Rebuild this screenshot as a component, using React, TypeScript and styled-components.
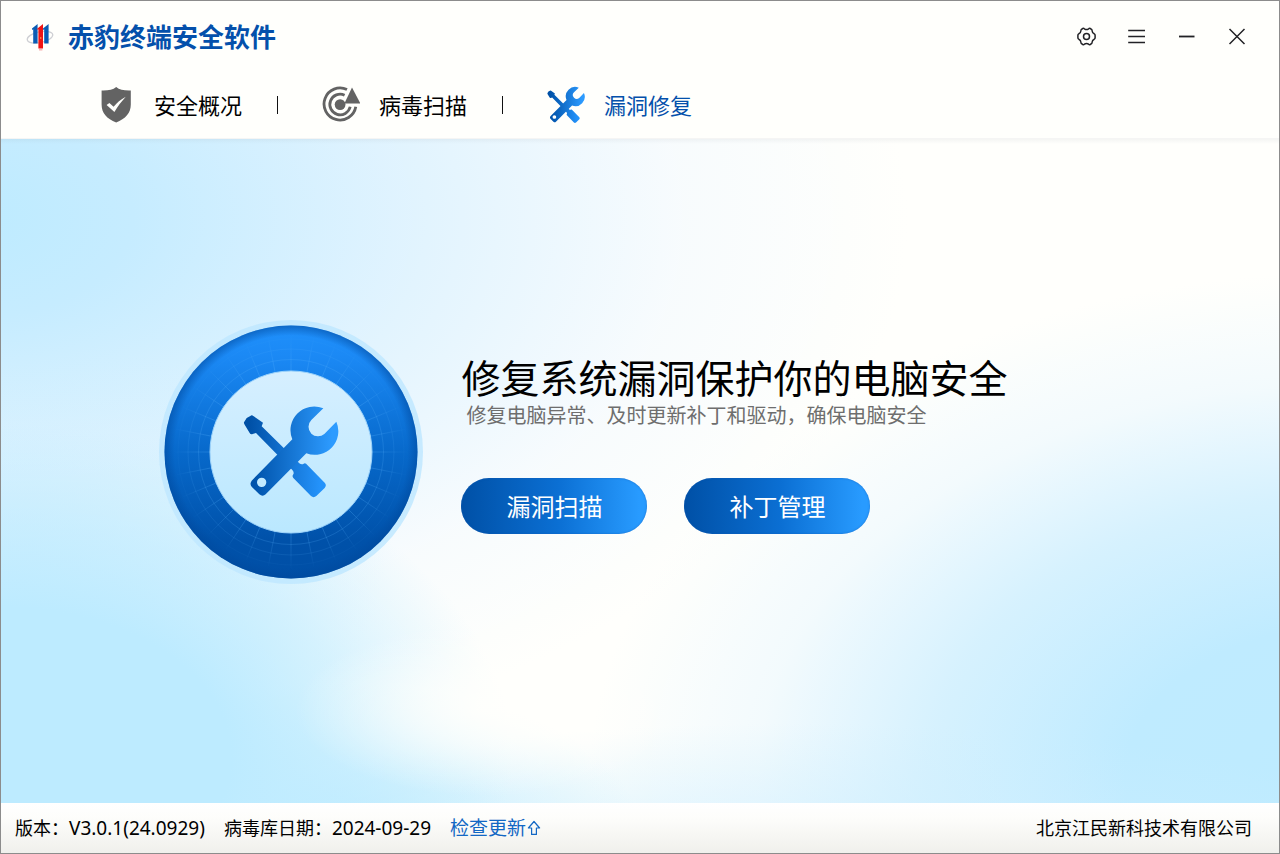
import React from "react";
import styled, { createGlobalStyle } from "styled-components";

const GlobalStyle = createGlobalStyle`
  * { box-sizing: border-box; }
  body { margin: 0; }
  button { font-family: inherit; }
`;

const Window = styled.div`
  display: flex;
  flex-direction: column;
  min-height: 100vh;
  border: 1px solid #8c8c8c;
  background: #fffffc;
  color: #000;
  font-family: "Noto Sans", "Noto Sans CJK SC", sans-serif;
`;

const Header = styled.header`
  padding-bottom: 1px;
  border-bottom: 1px solid #f5f5f4;
`;

const TitleBar = styled.div`
  display: flex;
  align-items: center;
  justify-content: space-between;
  height: 72px;
  padding: 0 17px 0 24px;
`;

const Brand = styled.div`
  display: flex;
  align-items: center;
  gap: 13px;
`;

const AppName = styled.h1`
  margin: 0;
  font-size: 26px;
  line-height: 36px;
  font-weight: 700;
  color: #0450ab;
`;

const WindowControls = styled.div`
  display: flex;
`;

const ControlButton = styled.button`
  display: flex;
  align-items: center;
  justify-content: center;
  width: 50px;
  height: 36px;
  padding: 0;
  border: 0;
  background: none;
  color: #222226;
  cursor: pointer;
`;

const Tabs = styled.nav`
  display: flex;
  align-items: center;
  height: 64px;
  padding-left: 96px;
`;

const Tab = styled.button<{ $active?: boolean }>`
  display: flex;
  align-items: center;
  gap: 19px;
  padding: 0;
  border: 0;
  background: none;
  font-size: 22px;
  line-height: 32px;
  color: ${(p) => (p.$active ? "#0450ab" : "#000")};
  cursor: pointer;
`;

const TabDivider = styled.span`
  width: 1px;
  height: 18px;
  margin: 0 44px 0 35px;
  background: #111;
`;

const Hero = styled.main`
  flex: 1;
  display: flex;
  align-items: center;
  padding: 20px 20px 58px 12.4%;
  background:
    linear-gradient(rgba(120, 130, 140, 0.08), rgba(120, 130, 140, 0) 5px),
    radial-gradient(ellipse 15% 13% at 38% 86%, rgba(255, 255, 252, 0.9) 0%, rgba(255, 255, 252, 0.6) 40%, rgba(255, 255, 252, 0) 100%),
    radial-gradient(ellipse 40% 50% at 0% 93%, #bdebff 0%, #bdebff 45%, rgba(189, 235, 255, 0.6) 70%, rgba(189, 235, 255, 0) 100%),
    radial-gradient(ellipse 24% 22% at 26% 104%, rgba(189, 235, 255, 0.9) 0%, rgba(189, 235, 255, 0.5) 50%, rgba(189, 235, 255, 0) 100%),
    radial-gradient(ellipse 50% 20% at 62% 108%, rgba(205, 238, 255, 0.7) 0%, rgba(215, 242, 255, 0) 100%),
    radial-gradient(ellipse 60% 76% at 106% 96%, #bdebff 0%, #bfebff 30%, rgba(204, 238, 255, 0.8) 56%, rgba(228, 245, 255, 0.45) 78%, rgba(240, 250, 255, 0) 100%),
    radial-gradient(ellipse 30% 34% at 0% 64%, rgba(205, 238, 255, 0.6) 0%, rgba(220, 243, 255, 0) 100%),
    radial-gradient(ellipse 74% 84% at -3% 12%, #bdebff 0%, #c6ecff 18%, rgba(218, 241, 255, 0.85) 46%, rgba(240, 248, 255, 0.5) 76%, rgba(255, 255, 253, 0) 100%),
    #fffffc;
`;

const HeroRow = styled.div`
  display: flex;
  align-items: flex-start;
  gap: 38px;
`;

const Copy = styled.div`
  padding-top: 36px;
`;

const Headline = styled.h2`
  margin: 0;
  font-size: 39px;
  line-height: 44px;
  font-weight: 400;
  white-space: nowrap;
`;

const Summary = styled.p`
  margin: 0;
  padding: 2px 0 0 5px;
  font-size: 20px;
  line-height: 28px;
  font-weight: 400;
  color: #6e6e6e;
`;

const Actions = styled.div`
  display: flex;
  gap: 37px;
  margin-top: 48px;
`;

const ActionButton = styled.button`
  width: 186px;
  height: 56px;
  padding: 2px 0 0;
  border: 0;
  border-radius: 28px;
  background: linear-gradient(90deg, #0050a6, #0b6fd3 52%, #289bff 96%);
  box-shadow: inset 0 0 2px rgba(20, 90, 180, 0.7);
  font-size: 24px;
  line-height: 32px;
  color: #fff;
  cursor: pointer;
`;

const Footer = styled.footer`
  display: flex;
  align-items: center;
  justify-content: space-between;
  height: 50px;
  padding: 0 27px 0 14px;
  background: linear-gradient(#fff, #fdfdfb 30%, #f0f0ec);
  font-size: 18px;
  line-height: 26px;
`;

const StatusGroup = styled.div`
  display: flex;
  align-items: center;
  gap: 19px;
`;

const StatusItem = styled.span`
  display: flex;
  align-items: baseline;
`;

const StatusValue = styled.span`
  font-size: 19px;
`;

const UpdateLink = styled.a`
  display: flex;
  align-items: center;
  gap: 1px;
  font-size: 19px;
  color: #1267c4;
  text-decoration: none;
`;

const BrandMark = () => (
  <svg width="30" height="30" viewBox="0 0 30 30" aria-hidden="true">
    <ellipse cx="15" cy="15.2" rx="13" ry="5.4" fill="none" stroke="#cfd0d4" strokeWidth="1.3" transform="rotate(-12 15 15.2)" />
    <path d="M7 6.6 12.6 2V21.6H8.2V7.2L7 8Z" fill="#0a5cb4" />
    <path d="M18 6.6 23.6 2V21.6H19.2V7.2L18 8Z" fill="#0a5cb4" />
    <path d="M12.4 6.6 18 2V26.4H13.4V7.2L12.4 8Z" fill="#f01414" />
    <path d="M14 27.8h3.4" stroke="#f7b0b0" strokeWidth="1.4" />
    <circle cx="15.8" cy="16" r="0.7" fill="#ffd34d" />
  </svg>
);

const GearIcon = () => (
  <svg width="20" height="20" viewBox="0 0 20 20" fill="none" stroke="currentColor" strokeWidth="1.5" strokeLinejoin="round" aria-hidden="true">
    <path d="M5.8 1.5Q6.7 1.1 7.4 1.8Q9.5 3.2 11.6 1.8Q12.3 1.1 13.2 1.5L14.5 2.3Q15.2 2.9 15.1 3.8Q15.2 5.9 17.2 6.8Q18.1 7.3 18.1 8.2V10.8Q18.1 11.7 17.2 12.2Q15.2 13.1 15.1 15.2Q15.2 16.1 14.5 16.7L13.2 17.5Q12.3 17.9 11.6 17.2Q9.5 15.8 7.4 17.2Q6.7 17.9 5.8 17.5L4.5 16.7Q3.8 16.1 3.9 15.2Q3.8 13.1 1.8 12.2Q0.9 11.7 0.9 10.8V8.2Q0.9 7.3 1.8 6.8Q3.8 5.9 3.9 3.8Q3.8 2.9 4.5 2.3Z" />
    <circle cx="9.5" cy="9.5" r="3" />
  </svg>
);

const MenuIcon = () => (
  <svg width="20" height="20" viewBox="0 0 20 20" stroke="currentColor" strokeWidth="1.7" aria-hidden="true">
    <path d="M1.2 3.5H18M1.2 9.5H18M1.2 15.5H18" />
  </svg>
);

const MinimizeIcon = () => (
  <svg width="20" height="20" viewBox="0 0 20 20" stroke="currentColor" strokeWidth="1.8" aria-hidden="true">
    <path d="M2 9.5H17.5" />
  </svg>
);

const CloseIcon = () => (
  <svg width="20" height="20" viewBox="0 0 20 20" stroke="currentColor" strokeWidth="1.5" aria-hidden="true">
    <path d="M2.5 2 17.5 17M17.5 2 2.5 17" />
  </svg>
);

const ShieldIcon = () => (
  <svg width="38" height="38" viewBox="0 0 38 38" aria-hidden="true">
    <path d="M19.2 1C22.6 3.8 27 4.7 33.8 4.5V18.5C33.8 27 28.5 33 19.2 36.4C9.8 33 4.6 27 4.6 18.5V4.5C11.2 4.7 15.8 3.8 19.2 1Z" fill="#636363" />
    <path d="M9.6 19 12.4 17 16.6 20.8C19.8 17 23.6 13.4 28.8 10.8C24.8 15.2 20.8 20.2 17.4 26Z" fill="#fffffc" />
  </svg>
);

const RadarIcon = () => (
  <svg width="38" height="38" viewBox="0 0 38 38" aria-hidden="true">
    <g fill="none" stroke="#636363" strokeWidth="2.8">
      <path d="M25 3.6A16 16 0 1 0 33.8 20.8" />
      <path d="M22.6 9.2A10.3 10.3 0 1 0 28.2 20.8" />
    </g>
    <circle cx="18.1" cy="18.6" r="5.4" fill="#636363" />
    <path d="M30 1.4 38.4 17.4H22.4Z" fill="#636363" />
  </svg>
);

const ToolsIcon = ({ size, id }: { size: number; id: string }) => (
  <svg width={size} height={size} viewBox="42 44 288 288" aria-hidden="true">
    <defs>
      <linearGradient id={id + "-wrench"} gradientUnits="userSpaceOnUse" x1="75" y1="0" x2="310" y2="0">
        <stop offset="0" stopColor="#0053ab" />
        <stop offset="1" stopColor="#2d9bff" />
      </linearGradient>
      <linearGradient id={id + "-driver"} gradientUnits="userSpaceOnUse" x1="60" y1="0" x2="275" y2="0">
        <stop offset="0" stopColor="#0050a6" />
        <stop offset="1" stopColor="#2493fb" />
      </linearGradient>
    </defs>
    <path
      fill={`url(#${id}-driver)`}
      d="M46 97Q43 101 47 106L62 131Q65 136 71 134L81 131 190 242Q197 250 192 256Q189 261 193 266L246 320Q254 327 262 320L287 296Q294 288 287 280L235 227Q230 220 224 223Q216 228 207 218L98 111 102 100 73 80Q68 76 64 80L53 86Z"
    />
    <path
      fill={`url(#${id}-wrench)`}
      fillRule="evenodd"
      d="M283 57 247 92A29 29 0 0 0 247 133A29 29 0 0 0 286 134L322 97A71 71 0 0 1 232 192L110 315Q101 323 91 315L68 292Q61 284 68 274L190 150A71 71 0 0 1 283 57ZM98 265A14 14 0 1 0 98 293A14 14 0 1 0 98 265Z"
    />
  </svg>
);

const UpArrowIcon = () => (
  <svg width="14" height="16" viewBox="0 0 14 16" fill="none" stroke="currentColor" strokeWidth="1.2" strokeLinejoin="round" aria-hidden="true">
    <path d="M7 1.5 12.6 8H9.4V14.4H4.6V8H1.4Z" />
  </svg>
);

const BadgeFrame = styled.div`
  display: grid;
  place-items: center;
  flex: none;
  > * {
    grid-area: 1 / 1;
  }
`;

const spokes = Array.from({ length: 32 }, (_, i) => i * 11.25);

const RepairBadge = () => (
  <BadgeFrame>
    <svg width="264" height="264" viewBox="0 0 264 264" aria-hidden="true">
      <defs>
        <linearGradient id="ring" x1="0" y1="0" x2="0" y2="1">
          <stop offset="0" stopColor="#1f90fb" />
          <stop offset="0.12" stopColor="#1b89f5" />
          <stop offset="0.5" stopColor="#0769cb" />
          <stop offset="0.85" stopColor="#0051a9" />
          <stop offset="1" stopColor="#004fa6" />
        </linearGradient>
        <radialGradient id="ringEdge">
          <stop offset="0.92" stopColor="#00489c" stopOpacity="0" />
          <stop offset="1" stopColor="#00489c" stopOpacity="0.55" />
        </radialGradient>
        <linearGradient id="disc" x1="0" y1="0" x2="0" y2="1">
          <stop offset="0" stopColor="#d6efff" />
          <stop offset="1" stopColor="#bae8ff" />
        </linearGradient>
        <radialGradient id="grid" gradientUnits="userSpaceOnUse" cx="132" cy="132" r="118">
          <stop offset="0.7" stopColor="#59b4ff" stopOpacity="0.28" />
          <stop offset="1" stopColor="#59b4ff" stopOpacity="0" />
        </radialGradient>
      </defs>
      <circle cx="132" cy="132" r="132" fill="#bfe8ff" fillOpacity="0.85" />
      <circle cx="132" cy="132" r="126.5" fill="url(#ring)" />
      <circle cx="132" cy="132" r="126.5" fill="url(#ringEdge)" />
      <g fill="none" stroke="url(#grid)">
        <circle cx="132" cy="132" r="92.5" />
        <circle cx="132" cy="132" r="103" />
        <circle cx="132" cy="132" r="113" />
        {spokes.map((deg) => {
          const a = (deg * Math.PI) / 180;
          const c = Math.cos(a);
          const s = Math.sin(a);
          return <path key={deg} d={`M${132 + 80 * c} ${132 + 80 * s}L${132.01 + 118 * c} ${132.01 + 118 * s}`} />;
        })}
      </g>
      <circle cx="132" cy="132" r="81" fill="url(#disc)" stroke="#9ed4fb" strokeWidth="1" />
    </svg>
    <ToolsIcon size={96} id="badge" />
  </BadgeFrame>
);

export default function App() {
  return (
    <>
      <GlobalStyle />
      <Window>
        <Header>
          <TitleBar>
            <Brand>
              <BrandMark />
              <AppName>赤豹终端安全软件</AppName>
            </Brand>
            <WindowControls>
              <ControlButton aria-label="设置"><GearIcon /></ControlButton>
              <ControlButton aria-label="菜单"><MenuIcon /></ControlButton>
              <ControlButton aria-label="最小化"><MinimizeIcon /></ControlButton>
              <ControlButton aria-label="关闭"><CloseIcon /></ControlButton>
            </WindowControls>
          </TitleBar>
          <Tabs>
            <Tab><ShieldIcon />安全概况</Tab>
            <TabDivider />
            <Tab><RadarIcon />病毒扫描</Tab>
            <TabDivider />
            <Tab $active aria-current="page"><ToolsIcon size={38} id="tab" />漏洞修复</Tab>
          </Tabs>
        </Header>
        <Hero>
          <HeroRow>
            <RepairBadge />
            <Copy>
              <Headline>修复系统漏洞保护你的电脑安全</Headline>
              <Summary>修复电脑异常、及时更新补丁和驱动，确保电脑安全</Summary>
              <Actions>
                <ActionButton>漏洞扫描</ActionButton>
                <ActionButton>补丁管理</ActionButton>
              </Actions>
            </Copy>
          </HeroRow>
        </Hero>
        <Footer>
          <StatusGroup>
            <StatusItem>版本：<StatusValue>V3.0.1(24.0929)</StatusValue></StatusItem>
            <StatusItem>病毒库日期：<StatusValue>2024-09-29</StatusValue></StatusItem>
            <UpdateLink href="#update">检查更新<UpArrowIcon /></UpdateLink>
          </StatusGroup>
          <span>北京江民新科技术有限公司</span>
        </Footer>
      </Window>
    </>
  );
}
